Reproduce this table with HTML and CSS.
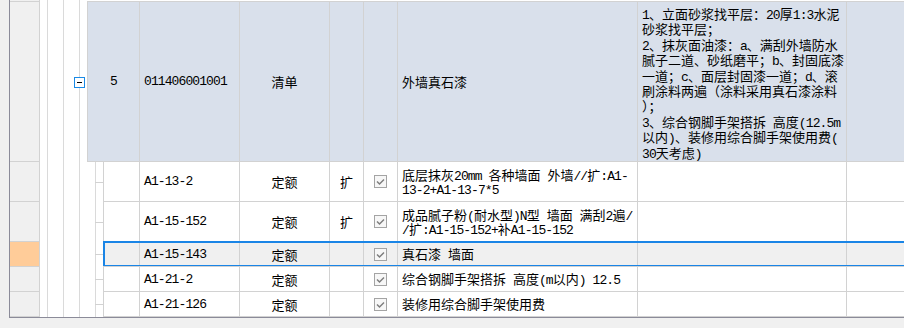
FILE: index.html
```html
<!DOCTYPE html>
<html>

	<head>
		<meta charset="UTF-8">
		<title>分部分项</title>
		<link rel="stylesheet" href="styles.css">
	</head>

	<body>
		<div class="grid">
			<!-- 上一行的尾部 -->
			<div class="row stub">
				<div class="rh"></div>
				<div class="indent"></div>
				<div class="cells"></div>
			</div>

			<!-- 清单行 -->
			<div class="row bill">
				<div class="rh"></div>
				<div class="indent">
					<svg class="fold" width="11" height="11" viewBox="0 0 11 11"><rect x="0.5" y="0.5" width="10" height="10" fill="#fff" stroke="#1a8ae6"/><path d="M3 5.5h5" stroke="#000"/></svg>
				</div>
				<div class="cells">
					<div class="c c-no m">5</div>
					<div class="c c-code m">011406001001</div>
					<div class="c c-type">清单</div>
					<div class="c c-ext"></div>
					<div class="c c-chk"></div>
					<div class="c c-name"><p>外墙真石漆</p></div>
					<div class="c c-feat">
						<p><span class="m">1</span>、立面砂浆找平层：<span class="m">20</span>厚<span class="m">1:3</span>水泥<br>砂浆找平层；<br><span class="m">2</span>、抹灰面油漆：<span class="m">a</span>、满刮外墙防水<br>腻子二道、砂纸磨平；<span class="m">b</span>、封固底漆<br>一道；<span class="m">c</span>、面层封固漆一道；<span class="m">d</span>、滚<br>刷涂料两遍（涂料采用真石漆涂料<br>）；<br><span class="m">3</span>、综合钢脚手架搭拆<span class="m"> </span>高度<span class="m">(12.5m</span><br>以内<span class="m">)</span>、装修用综合脚手架使用费<span class="m">(</span><br><span class="m">30</span>天考虑<span class="m">)</span></p>
					</div>
					<div class="c c-rest"></div>
				</div>
			</div>

			<!-- 定额子目 -->
			<div class="row sub tall">
				<div class="rh"></div>
				<div class="indent"></div>
				<div class="cells">
					<div class="c c-no"></div>
					<div class="c c-code m">A1-13-2</div>
					<div class="c c-type">定额</div>
					<div class="c c-ext">扩</div>
					<div class="c c-chk"><svg width="13" height="13" viewBox="0 0 13 13"><rect x="0.5" y="0.5" width="12" height="12" fill="#f7f7f7" stroke="#a4a4a4"/><path d="M3 6.5l2.5 2.5 4.5-4.5" fill="none" stroke="#7e7e7e" stroke-width="1.5"/></svg></div>
					<div class="c c-name"><p>底层抹灰<span class="m">20mm </span>各种墙面<span class="m"> </span>外墙<span class="m">//</span>扩<span class="m">:A1-</span><br><span class="m">13-2+A1-13-7*5</span></p></div>
					<div class="c c-feat"></div>
					<div class="c c-rest"></div>
				</div>
			</div>

			<div class="row sub tall">
				<div class="rh"></div>
				<div class="indent"></div>
				<div class="cells">
					<div class="c c-no"></div>
					<div class="c c-code m">A1-15-152</div>
					<div class="c c-type">定额</div>
					<div class="c c-ext">扩</div>
					<div class="c c-chk"><svg width="13" height="13" viewBox="0 0 13 13"><rect x="0.5" y="0.5" width="12" height="12" fill="#f7f7f7" stroke="#a4a4a4"/><path d="M3 6.5l2.5 2.5 4.5-4.5" fill="none" stroke="#7e7e7e" stroke-width="1.5"/></svg></div>
					<div class="c c-name"><p>成品腻子粉<span class="m">(</span>耐水型<span class="m">)N</span>型<span class="m"> </span>墙面<span class="m"> </span>满刮<span class="m">2</span>遍<span class="m">/</span><br><span class="m">/</span>扩<span class="m">:A1-15-152+</span>补<span class="m">A1-15-152</span></p></div>
					<div class="c c-feat"></div>
					<div class="c c-rest"></div>
				</div>
			</div>

			<div class="row sub short sel">
				<div class="rh"></div>
				<div class="indent"></div>
				<div class="cells">
					<div class="c c-no"></div>
					<div class="c c-code m">A1-15-143</div>
					<div class="c c-type">定额</div>
					<div class="c c-ext"></div>
					<div class="c c-chk"><svg width="13" height="13" viewBox="0 0 13 13"><rect x="0.5" y="0.5" width="12" height="12" fill="#f7f7f7" stroke="#a4a4a4"/><path d="M3 6.5l2.5 2.5 4.5-4.5" fill="none" stroke="#7e7e7e" stroke-width="1.5"/></svg></div>
					<div class="c c-name"><p>真石漆<span class="m"> </span>墙面</p></div>
					<div class="c c-feat"></div>
					<div class="c c-rest"></div>
				</div>
			</div>

			<div class="row sub short">
				<div class="rh"></div>
				<div class="indent"></div>
				<div class="cells">
					<div class="c c-no"></div>
					<div class="c c-code m">A1-21-2</div>
					<div class="c c-type">定额</div>
					<div class="c c-ext"></div>
					<div class="c c-chk"><svg width="13" height="13" viewBox="0 0 13 13"><rect x="0.5" y="0.5" width="12" height="12" fill="#f7f7f7" stroke="#a4a4a4"/><path d="M3 6.5l2.5 2.5 4.5-4.5" fill="none" stroke="#7e7e7e" stroke-width="1.5"/></svg></div>
					<div class="c c-name"><p>综合钢脚手架搭拆<span class="m"> </span>高度<span class="m">(m</span>以内<span class="m">) 12.5</span></p></div>
					<div class="c c-feat"></div>
					<div class="c c-rest"></div>
				</div>
			</div>

			<div class="row sub short">
				<div class="rh"></div>
				<div class="indent"></div>
				<div class="cells">
					<div class="c c-no"></div>
					<div class="c c-code m">A1-21-126</div>
					<div class="c c-type">定额</div>
					<div class="c c-ext"></div>
					<div class="c c-chk"><svg width="13" height="13" viewBox="0 0 13 13"><rect x="0.5" y="0.5" width="12" height="12" fill="#f7f7f7" stroke="#a4a4a4"/><path d="M3 6.5l2.5 2.5 4.5-4.5" fill="none" stroke="#7e7e7e" stroke-width="1.5"/></svg></div>
					<div class="c c-name"><p>装修用综合脚手架使用费</p></div>
					<div class="c c-feat"></div>
					<div class="c c-rest"></div>
				</div>
			</div>
		</div>
	</body>

</html>
```

FILE: styles.css
```css
* {
	margin: 0;
	padding: 0;
	box-sizing: border-box;
}

body {
	width: 904px;
	height: 328px;
	overflow: hidden;
	background: #f0f0f0;
	font: 13px "Noto Sans CJK SC", sans-serif;
	color: #000;
}

/* 半角字符用等宽字体 */
.m {
	font-family: "Liberation Mono", monospace;
	letter-spacing: -0.9px;
}

/* 行内的等宽片段不撑高行框 */
span.m {
	line-height: 0;
}

.grid {
	margin-left: 9px;
	border-left: 1px solid #8b8b99;
	border-bottom: 1px solid #8b8b99;
	background: #fff;
}

.row {
	display: flex;
}

.stub {
	height: 2px;
}

.bill {
	height: 160px;
}

.tall {
	height: 40px;
}

.short {
	height: 25px;
}

/* 行头 */
.rh {
	flex: none;
	width: 30px;
	background: #f0f0f0;
	border-right: 1px solid #d2d2d2;
	border-bottom: 1px solid #d2d2d2;
}

.sel .rh {
	background: #ffcc99;
}

/* 树形缩进 */
.indent {
	flex: none;
	width: 47px;
	display: flex;
	align-items: center;
	justify-content: flex-end;
	padding-right: 2px;
	background: repeating-linear-gradient(to right, transparent 0 7px, #dadada 7px 8px, transparent 8px 16px);
}

.sub .indent {
	width: 63px;
	background:
		linear-gradient(#d2d2d2, #d2d2d2) right center / 8px 1px no-repeat,
		repeating-linear-gradient(to right, transparent 0 7px, #dadada 7px 8px, transparent 8px 16px);
}

.fold {
	display: block;
}

.cells {
	flex: 1;
	display: flex;
	border-bottom: 1px solid #d2d2d2;
}

.bill .cells {
	background: #d9e0eb;
}

.sel .cells {
	background: #f0f0f0;
	position: relative;
}

/* 当前选中行的蓝框 */
.sel .cells::after {
	content: "";
	position: absolute;
	left: 0;
	right: 0;
	top: -1px;
	bottom: 0;
	border: solid #1a85e6;
	border-width: 2px 0 1px 2px;
}

.c {
	flex: none;
	display: flex;
	align-items: center;
	border-left: 1px solid #d2d2d2;
	overflow: hidden;
	white-space: nowrap;
}

.c-no {
	width: 36px;
	justify-content: center;
}

.bill .c-no {
	width: 52px;
}

.c-code {
	width: 100px;
	padding-left: 4px;
}

.c-type {
	width: 90px;
	justify-content: center;
}

.c-ext,
.c-chk {
	width: 34px;
	justify-content: center;
}

.c-chk svg {
	display: block;
}

.c-name {
	width: 240px;
	padding-left: 4px;
	line-height: 14px;
}

.c-feat {
	width: 209px;
	align-items: flex-start;
	padding: 4px 0 0 4px;
	line-height: 15.4px;
}

.c-rest {
	flex: 1;
}
```
